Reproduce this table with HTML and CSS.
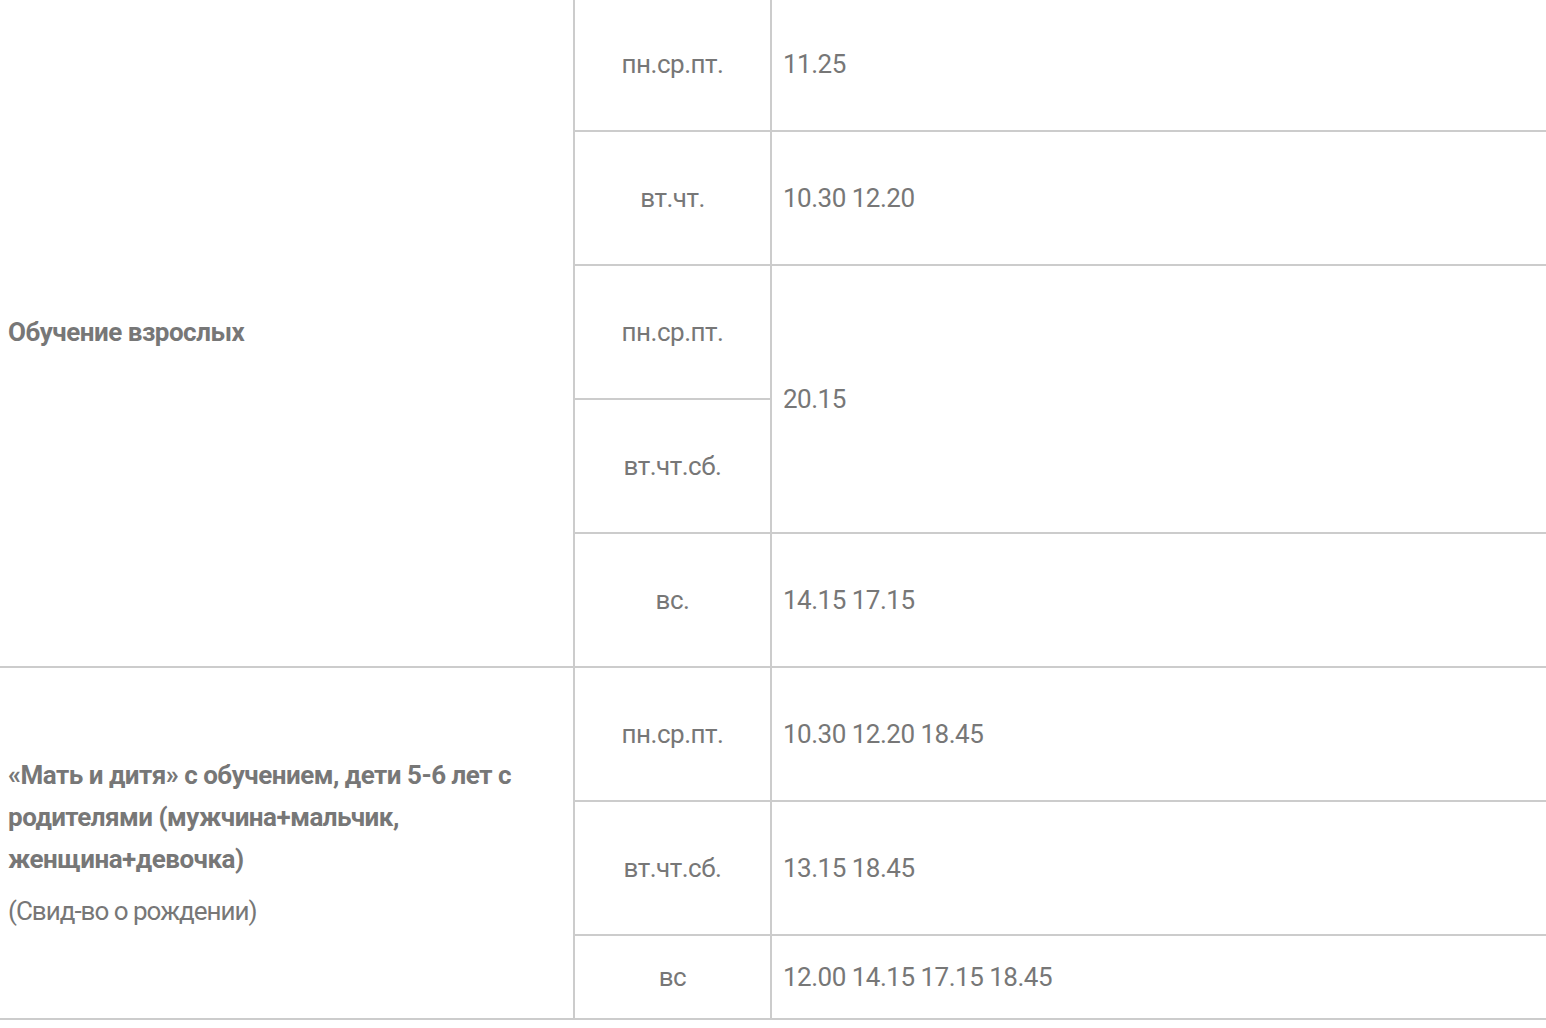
FILE: index.html
```html
<!DOCTYPE html>
<html lang="ru">
<head>
<meta charset="utf-8">
<title>Расписание</title>
<link rel="stylesheet" href="styles.css">
</head>
<body>
<table class="schedule">
  <tbody>
    <tr class="row">
      <td class="name" rowspan="5"><p class="title">Обучение взрослых</p></td>
      <td class="days">пн.ср.пт.</td>
      <td class="times">11.25</td>
    </tr>
    <tr class="row">
      <td class="days">вт.чт.</td>
      <td class="times">10.30 12.20</td>
    </tr>
    <tr class="row">
      <td class="days">пн.ср.пт.</td>
      <td class="times" rowspan="2">20.15</td>
    </tr>
    <tr class="row">
      <td class="days">вт.чт.сб.</td>
    </tr>
    <tr class="row">
      <td class="days">вс.</td>
      <td class="times">14.15 17.15</td>
    </tr>
    <tr class="row">
      <td class="name" rowspan="3">
        <p class="title">«Мать и дитя» с обучением, дети 5-6 лет с родителями (мужчина+мальчик, женщина+девочка)</p>
        <p class="note">(Свид-во о рождении)</p>
      </td>
      <td class="days">пн.ср.пт.</td>
      <td class="times">10.30 12.20 18.45</td>
    </tr>
    <tr class="row">
      <td class="days">вт.чт.сб.</td>
      <td class="times">13.15 18.45</td>
    </tr>
    <tr class="row row-last">
      <td class="days">вс</td>
      <td class="times">12.00 14.15 17.15 18.45</td>
    </tr>
  </tbody>
</table>
</body>
</html>
```

FILE: styles.css
```css
html, body {
  margin: 0;
  padding: 0;
  background: #fff;
}

body {
  font-family: Roboto, "Noto Sans", sans-serif;
  color: #777;
}

.schedule {
  width: 100%;
  border-collapse: collapse;
  table-layout: fixed;
  margin-top: -4px;
  font-size: 26px;
  letter-spacing: -0.5px;
}

.schedule td {
  border: 2px solid #ccc;
  padding: 0;
  vertical-align: middle;
}

.row td {
  height: 132px;
}

.row-last td {
  height: 82px;
}

.name {
  width: 557px;
  border-left: none !important;
  padding: 0 8px !important;
  text-align: left;
}

.days {
  width: 195px;
  text-align: center;
}

.times {
  border-right: none !important;
  padding-left: 11px !important;
  text-align: left;
}

.title {
  margin: 0;
  font-weight: 700;
  line-height: 42px;
  padding-right: 40px;
}

.note {
  margin: 10px 0 0;
  line-height: 42px;
  letter-spacing: -1px;
}
```
